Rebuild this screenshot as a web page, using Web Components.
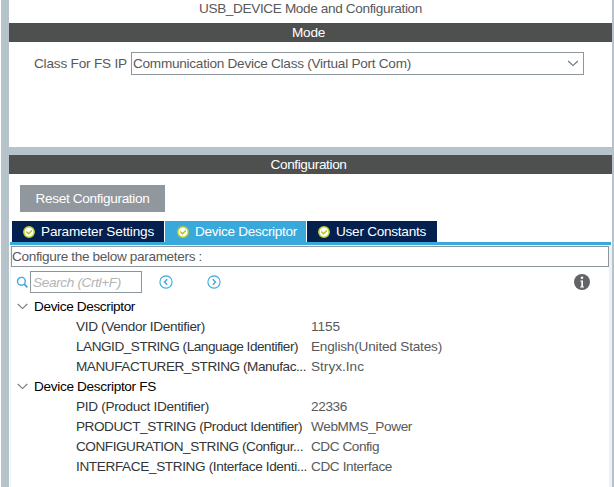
<!DOCTYPE html>
<html lang="en">
<head>
<meta charset="utf-8">
<title>USB_DEVICE Mode and Configuration</title>
<style>
html,body{margin:0;height:100%;overflow:hidden;background:#fff}
body{font:13.6px/16px "Liberation Sans",Arial,sans-serif;color:#58595b}
</style>
</head>
<body>
<usb-config-page></usb-config-page>
<script>
const define = (name, html, setup) => customElements.define(name, class extends HTMLElement {
  connectedCallback() {
    if (this.shadowRoot) return;
    const root = this.attachShadow({mode: 'open'});
    const t = document.createElement('template');
    t.innerHTML = html;
    root.append(t.content.cloneNode(true));
    if (setup) setup(this, root);
  }
});

// One line of text whose tracking is adjusted to a given advance width.
define('fit-text', `<style>:host{display:inline-block;white-space:pre;flex:none}</style><slot></slot>`, el => {
  const w = +el.getAttribute('w');
  const natural = el.getBoundingClientRect().width;
  if (w && natural) {
    el.style.letterSpacing = ((w - natural) / el.textContent.length) + 'px';
  }
});

define('section-header', `<style>
:host{display:flex;justify-content:center;box-sizing:border-box;height:19px;padding-right:4px;background:#4d504f;color:#fff;line-height:19px;flex:none}
</style><slot></slot>`);

define('select-box', `<style>
:host{display:flex;align-items:center;justify-content:space-between;box-sizing:border-box;width:453px;height:23px;border:1px solid #8c969d;padding:0 4px 0 1px}
svg{display:block}
</style><slot></slot><svg width="12" height="7" viewBox="0 0 12 7"><path d="M1.2 1 6 5.6 10.8 1" fill="none" stroke="#6d7072" stroke-width="1.1"/></svg>`);

define('flat-button', `<style>
:host{display:flex;align-items:center;justify-content:center;width:145px;height:27px;background:#90989e;color:#fff}
</style><slot></slot>`);

define('config-tab', `<style>
:host{display:flex;align-items:center;box-sizing:border-box;height:21px;padding-left:11px;background:#03204f;color:#fff}
:host([active]){background:#39a9dc;padding-left:12px}
svg{display:block;margin-right:6px;flex:none}
</style><svg width="12" height="12" viewBox="0 0 12 12"><circle cx="6" cy="6" r="5.2" fill="#fff" stroke="#bfd026" stroke-width="1.5"/><path d="M3.3 5.5 5.5 7.7 8.9 4.5" fill="none" stroke="#afc21b" stroke-width="1.4"/></svg><slot></slot>`);

define('search-bar', `<style>
:host{display:flex;height:30px;box-sizing:border-box;padding:4px 0 0 5px}
svg{display:block;flex:none}
.field{box-sizing:border-box;width:112px;height:22px;border:1px solid #8c969d;padding-left:2px;line-height:21px;font-style:italic;color:#b2b4b6;margin-left:1px}
.mag{margin:5px 0 0 0}.prev{margin:4px 0 0 17px}.next{margin:4px 0 0 34px}.info{margin:3px 0 0 353px}
</style>
<svg class="mag" width="13" height="13" viewBox="0 0 13 13" fill="none" stroke="#39a9dc"><circle cx="5.4" cy="5.3" r="3.9" stroke-width="1.4"/><path d="m8.2 8.2 3.2 3.2" stroke-width="1.8"/></svg>
<div class="field"><fit-text w="88">Search (Crtl+F)</fit-text></div>
<svg class="prev" width="14" height="14" viewBox="0 0 14 14" fill="none" stroke="#39a9dc"><circle cx="7" cy="7" r="6.1" stroke-width="1.1"/><path d="M8.2 4.3 5.5 7l2.7 2.7" stroke-width="1.4"/></svg>
<svg class="next" width="14" height="14" viewBox="0 0 14 14" fill="none" stroke="#39a9dc"><circle cx="7" cy="7" r="6.1" stroke-width="1.1"/><path d="M5.8 4.3 8.5 7 5.8 9.7" stroke-width="1.4"/></svg>
<svg class="info" width="16" height="16" viewBox="0 0 16 16"><circle cx="8" cy="8" r="8" fill="#636466"/><circle cx="8" cy="3.8" r="1.3" fill="#fff"/><path d="M6.3 6.4H9v6h1v1H6.2v-1h1.1v-5h-1z" fill="#fff"/></svg>`);

define('tree-group', `<style>
:host{display:block}
.head{display:flex;height:20px;line-height:19px;align-items:flex-start;color:#000;padding-left:6px}
svg{margin:6px 6px 0 0;flex:none}
</style><div class="head"><svg width="11" height="7" viewBox="0 0 11 7"><path d="M.7 1 5.5 5.6 10.3 1" fill="none" stroke="#77797b" stroke-width="1.1"/></svg><slot name="title"></slot></div><slot></slot>`);

define('param-row', `<style>
:host{display:grid;grid-template-columns:235px 1fr;height:20px;line-height:19px;padding-left:65px}
.name{color:#333537}
</style><div class="name"><slot name="name"></slot></div><div><slot></slot></div>`);

define('usb-config-page', `<style>
:host{display:grid;grid-template-columns:1px 8px 603px 2px;width:614px;height:487px}
.bar{background:#b7c3ca}
main{display:flex;flex-direction:column;min-width:0}
.title{height:23px;line-height:17px;text-align:center;flex:none}
.mode{height:105px;box-sizing:border-box;padding-top:10px;flex:none}
.line{display:flex;line-height:23px;padding-left:25px;gap:4px}
.split{height:8px;background:#b7c3ca;flex:none}
.actions{box-sizing:border-box;padding:11px 0 0 11px;height:47px;flex:none}
.tabs{display:flex;height:21px;gap:1px;padding-left:3px;flex:none}
.rule{height:3px;background:#39a9dc;margin:0 1px;flex:none}
.pane{flex:1;margin:0 0 0 1px;border-left:1px solid #eef2f4;border-right:3px solid #eef2f4;padding-top:1px;background:linear-gradient(#eef2f4 1px,#fff 1px)}
.desc{box-sizing:border-box;height:21px;border:1px solid #8c969d;line-height:19px}
</style>
<div></div><div class="bar"></div>
<main>
 <div class="title"><fit-text w="223">USB_DEVICE Mode and Configuration</fit-text></div>
 <section-header><fit-text w="33">Mode</fit-text></section-header>
 <div class="mode"><div class="line"><fit-text w="93">Class For FS IP</fit-text><select-box><fit-text w="278">Communication Device Class (Virtual Port Com)</fit-text></select-box></div></div>
 <div class="split"></div>
 <section-header><fit-text w="76">Configuration</fit-text></section-header>
 <div class="actions"><flat-button><fit-text w="114">Reset Configuration</fit-text></flat-button></div>
 <div class="tabs">
  <config-tab style="width:152px"><fit-text w="113">Parameter Settings</fit-text></config-tab>
  <config-tab active style="width:141px"><fit-text w="102">Device Descriptor</fit-text></config-tab>
  <config-tab style="width:130px"><fit-text w="90">User Constants</fit-text></config-tab>
 </div>
 <div class="rule"></div>
 <div class="pane">
  <div class="desc"><fit-text w="190">Configure the below parameters :</fit-text></div>
  <search-bar></search-bar>
  <tree-group><fit-text slot="title" w="101">Device Descriptor</fit-text>
   <param-row><fit-text slot="name" w="129">VID (Vendor IDentifier)</fit-text><fit-text w="29">1155</fit-text></param-row>
   <param-row><fit-text slot="name" w="222">LANGID_STRING (Language Identifier)</fit-text><fit-text w="131">English(United States)</fit-text></param-row>
   <param-row><fit-text slot="name" w="230">MANUFACTURER_STRING (Manufac...</fit-text><fit-text w="53">Stryx.Inc</fit-text></param-row>
  </tree-group>
  <tree-group><fit-text slot="title" w="122">Device Descriptor FS</fit-text>
   <param-row><fit-text slot="name" w="133">PID (Product IDentifier)</fit-text><fit-text w="36">22336</fit-text></param-row>
   <param-row><fit-text slot="name" w="226">PRODUCT_STRING (Product Identifier)</fit-text><fit-text w="101">WebMMS_Power</fit-text></param-row>
   <param-row><fit-text slot="name" w="227">CONFIGURATION_STRING (Configur...</fit-text><fit-text w="68">CDC Config</fit-text></param-row>
   <param-row><fit-text slot="name" w="231">INTERFACE_STRING (Interface Identi...</fit-text><fit-text w="81">CDC Interface</fit-text></param-row>
  </tree-group>
 </div>
</main>
<div class="bar"></div>`);
</script>
</body>
</html>
